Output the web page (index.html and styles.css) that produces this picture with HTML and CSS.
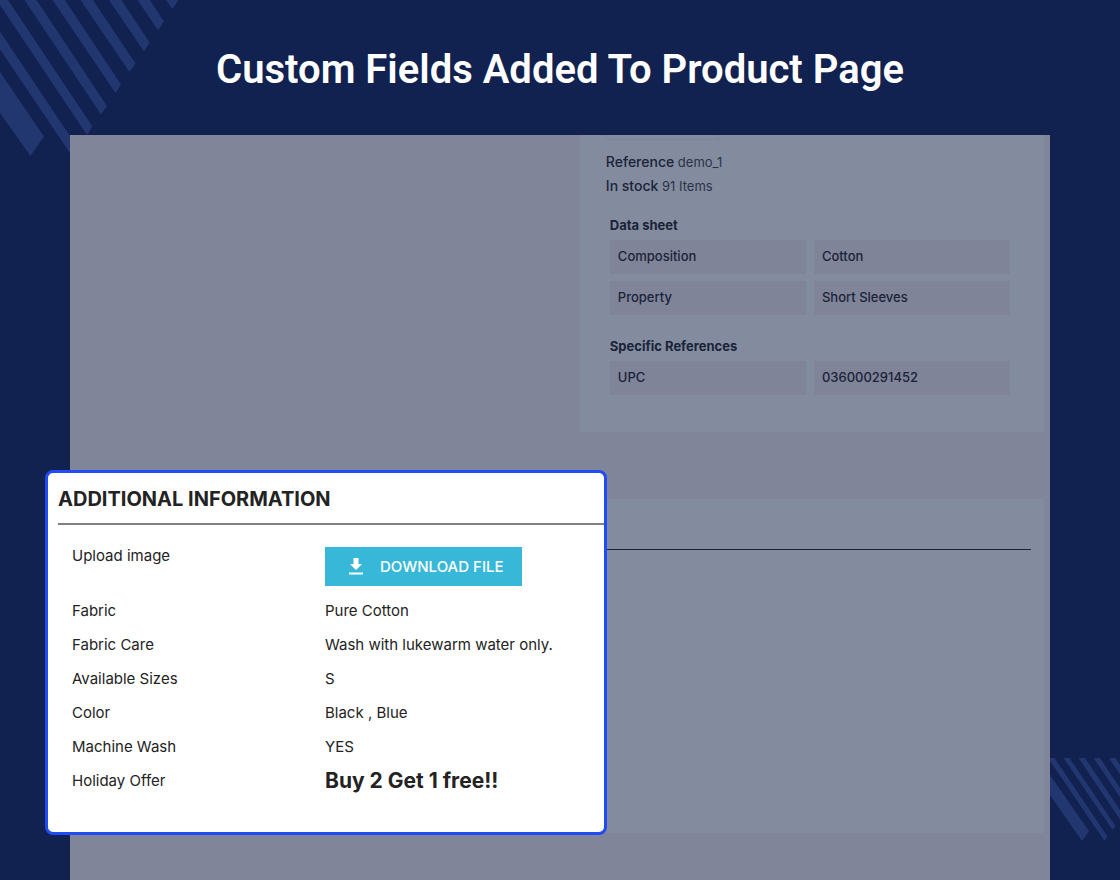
FILE: index.html
```html
<!DOCTYPE html>
<html lang="en">
<head>
    <meta charset="UTF-8">
    <meta name="viewport" content="width=device-width, initial-scale=1.0">
    <title>Custom Fields Added To Product Page</title>
    <link rel="stylesheet" href="styles.css">
</head>
<body>

    <!-- Decorative stripes -->
    <svg class="stripes stripes-top" width="180" height="158" viewBox="0 0 180 158" aria-hidden="true">
        <path d="M0 72 L44 136.500 L30.500 156 L0 113Z"/>
        <path d="M0 31.500 L78 148 L72 156 L0 49.500Z"/>
        <path d="M0 0 H8 L92.500 126.500 L87 135 L0 5Z"/>
        <path d="M24.500 0 H36.500 L107 106 L101 114.500Z"/>
        <path d="M52.500 0 H65 L121 84.500 L115.500 93Z"/>
        <path d="M80.500 0 H93 L135.500 63.500 L129.500 72Z"/>
        <path d="M109 0 H121.500 L149.500 42.500 L144 51.500Z"/>
        <path d="M137.500 0 H150 L164 21.500 L158 30.500Z"/>
        <path d="M166 0 H178.500 L172.500 9Z"/>
    </svg>
    <svg class="stripes stripes-side" width="70" height="84" viewBox="0 0 70 84" aria-hidden="true">
        <path d="M0 17 L39 73 L32 83 L0 37Z"/>
        <path d="M0 0 H4.500 L57.500 78.500 L54.500 83 L0 3Z"/>
        <path d="M13.500 0 H19.500 L65.500 68 L62.500 72Z"/>
        <path d="M28.500 0 H35 L70 52 V61.500Z"/>
        <path d="M43.500 0 H50 L70 30 V39Z"/>
        <path d="M59 0 H65.500 L70 7 V16.500Z"/>
    </svg>

    <header class="page-header">
        <h1>Custom Fields Added To Product Page</h1>
    </header>

    <main class="product-page">
        <!-- Product details -->
        <section class="product-card">
            <div class="brand-box"></div>
            <p class="product-line"><span class="line-label">Reference</span> demo_1</p>
            <p class="product-line"><span class="line-label">In stock</span> 91 Items</p>

            <div class="features">
                <h2>Data sheet</h2>
                <dl class="feature-list">
                    <dt>Composition</dt>
                    <dd>Cotton</dd>
                    <dt>Property</dt>
                    <dd>Short Sleeves</dd>
                </dl>
                <h2>Specific References</h2>
                <dl class="feature-list">
                    <dt>UPC</dt>
                    <dd>036000291452</dd>
                </dl>
            </div>
        </section>

        <!-- Extra content with the custom fields on top -->
        <section class="extra-card">
            <hr class="extra-line">

            <div class="info-popup">
                <h2>ADDITIONAL INFORMATION</h2>
                <dl class="info-list">
                    <dt>Upload image</dt>
                    <dd>
                        <button class="download-btn" type="button">
                            <svg width="14" height="17" viewBox="0 0 14 17" aria-hidden="true">
                                <path d="M4.500 0h5v6H13L7 12 1 6h3.500zM0 14.500h14v2H0z"/>
                            </svg>
                            DOWNLOAD FILE
                        </button>
                    </dd>
                    <dt>Fabric</dt>
                    <dd>Pure Cotton</dd>
                    <dt>Fabric Care</dt>
                    <dd>Wash with lukewarm water only.</dd>
                    <dt>Available Sizes</dt>
                    <dd>S</dd>
                    <dt>Color</dt>
                    <dd>Black , Blue</dd>
                    <dt>Machine Wash</dt>
                    <dd>YES</dd>
                    <dt>Holiday Offer</dt>
                    <dd class="offer">Buy 2 Get 1 free!!</dd>
                </dl>
            </div>
        </section>
    </main>

</body>
</html>
```

FILE: styles.css
```css
* {
    margin: 0;
    padding: 0;
    box-sizing: border-box;
}

body {
    background: #112150;
    font-family: Inter, "Open Sans", sans-serif;
    min-height: 100vh;
    display: flex;
    flex-direction: column;
    position: relative;
    overflow-x: hidden;
}

/* Decorative stripes */
.stripes {
    position: absolute;
    fill: #22366f;
}

.stripes-top {
    top: 0;
    left: 0;
}

.stripes-side {
    right: 0;
    bottom: 38px;
}

.page-header {
    position: relative;
    padding: 46px 20px 41px;
    text-align: center;
}

.page-header h1 {
    font-family: Roboto, sans-serif;
    font-size: 40px;
    font-weight: 600;
    line-height: 48px;
    color: #fff;
}

.product-page {
    position: relative;
    flex: 1;
    margin: 0 70px;
    padding: 0 6px 47px 7px;
    background: #808599;
    color: #1b2338;
}

/* Product details */
.product-card {
    width: 48%;
    min-width: 463px;
    margin-left: auto;
    padding: 0 26px 37px;
    background: #838c9e;
}

.brand-box {
    width: 114px;
    height: 5px;
    margin-bottom: 10px;
    border: 1px solid #7e8699;
    border-top: none;
}

.product-line {
    font-size: 13px;
    line-height: 24px;
    color: #2a3348;
}

.line-label {
    font-size: 14px;
    font-weight: 500;
    color: #1b2338;
}

.features {
    padding: 17px 8px 0 4px;
}

.features h2 {
    font-size: 13px;
    font-weight: 700;
    line-height: 20px;
    margin-bottom: 5px;
}

.feature-list {
    display: grid;
    grid-template-columns: 1fr 1fr;
    gap: 7px 8px;
    margin-bottom: 21px;
}

.feature-list:last-child {
    margin-bottom: 0;
}

.feature-list dt,
.feature-list dd {
    padding: 6px 8px 8px;
    background: #7f8498;
    font-size: 13px;
    font-weight: 500;
    line-height: 20px;
}

/* Extra content */
.extra-card {
    position: relative;
    min-height: 334px;
    margin-top: 67px;
    padding: 50px 13px 0;
    background: #838c9e;
}

.extra-line {
    border: none;
    border-top: 1px solid #1b2338;
}

/* Custom fields popup */
.info-popup {
    position: absolute;
    top: -29px;
    left: -32px;
    width: 58%;
    min-width: 562px;
    padding: 11px 0 34px 10px;
    background: #fff;
    border: 3px solid #204bf5;
    border-radius: 8px;
    color: #232323;
}

.info-popup h2 {
    font-size: 20px;
    font-weight: 700;
    line-height: 30px;
    padding-bottom: 9px;
    border-bottom: 2px solid #808080;
}

.info-list {
    display: grid;
    grid-template-columns: 253px 1fr;
    padding: 14px 14px 0;
    font-size: 15px;
    line-height: 34px;
}

.download-btn {
    display: flex;
    align-items: center;
    gap: 17px;
    height: 39px;
    margin: 8px 0;
    padding: 0 18px 0 24px;
    background: #38b8d8;
    border: none;
    color: #fff;
    font-family: inherit;
    font-size: 15px;
    font-weight: 500;
    cursor: pointer;
}

.download-btn svg {
    fill: #fff;
}

.info-list .offer {
    font-size: 21px;
    font-weight: 700;
}
```
